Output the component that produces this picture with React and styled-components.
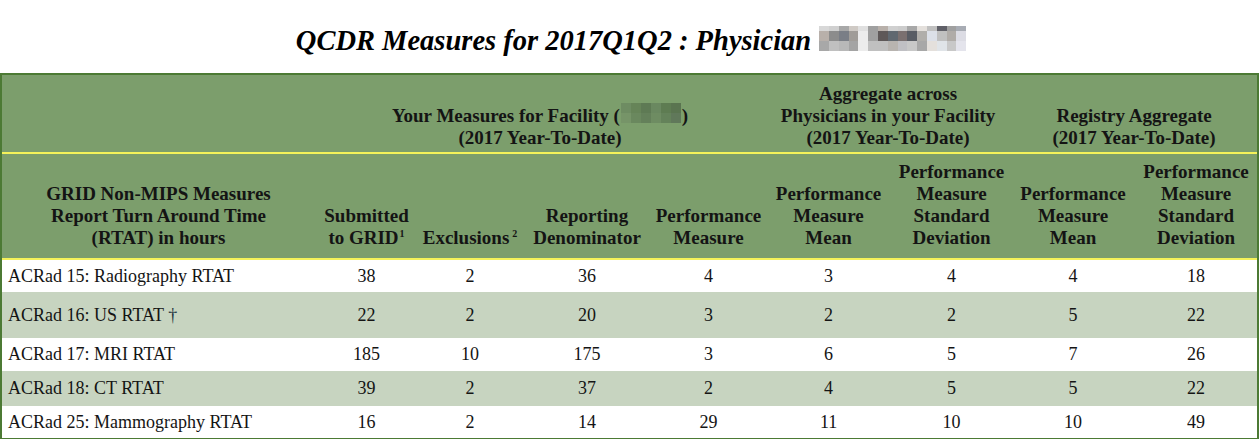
import React from 'react';
import styled, { createGlobalStyle } from 'styled-components';

const GlobalStyle = createGlobalStyle`
  html, body {
    margin: 0;
    padding: 0;
    background: #ffffff;
  }
  body {
    font-family: "Liberation Serif", "Times New Roman", serif;
    color: #111111;
  }
`;

const Page = styled.div`
  width: 1259px;
`;

const TitleBar = styled.div`
  height: 73px;
  box-sizing: border-box;
  padding: 26px 0 0 11px;
  text-align: center;
`;

const Title = styled.h1`
  margin: 0;
  font-size: 28.5px;
  font-weight: bold;
  font-style: italic;
  color: #000000;
  line-height: 1;
  white-space: nowrap;
`;

const Mosaic = styled.span`
  display: inline-block;
  overflow: hidden;
  vertical-align: ${p => p.$shift}px;
  margin: 0 ${p => p.$gap}px;
`;

const MosaicGrid = styled.span`
  display: grid;
  grid-template-columns: repeat(${p => p.$cols}, ${p => p.$cell}px);
  grid-template-rows: ${p => p.$rows};
`;

const Table = styled.table`
  width: 1259px;
  table-layout: fixed;
  border-collapse: separate;
  border-spacing: 0;
  border: 2px solid #4c7a34;
  font-family: "Liberation Serif", "Times New Roman", serif;
`;

const HeadRow = styled.tr`
  background: #7c9e6c;
`;

const HeadCell = styled.th`
  height: ${p => p.$height}px;
  padding: 0 2px ${p => p.$padBottom}px;
  box-sizing: border-box;
  vertical-align: bottom;
  text-align: center;
  font-size: 19px;
  line-height: 22px;
  font-weight: bold;
  color: #141414;
  border-bottom: 2px solid #f4f25a;
  white-space: nowrap;

  sup {
    font-size: 10px;
    line-height: 0;
    vertical-align: 7px;
    margin-left: ${p => (p.$supGap ? 3 : 1)}px;
  }
`;

const Row = styled.tr`
  background: ${p => (p.$striped ? '#c7d4c0' : '#ffffff')};
`;

const Cell = styled.td`
  height: ${p => p.$height}px;
  padding: 0 0 0 ${p => (p.$label ? 6 : 0)}px;
  box-sizing: border-box;
  text-align: ${p => (p.$label ? 'left' : 'center')};
  vertical-align: middle;
  font-size: 18px;
  color: #141414;
  white-space: nowrap;
`;

const Dagger = styled.span`
  color: #1e3440;
`;

const widths = [313, 103, 104, 130, 113, 127, 119, 124, 122];

const titleCells = [
  ['#d8d8d8', '#d0d0d0', '#a8a8a8', '#cfcac5', '#e0e0e0', '#a0a0a0', '#b8b0aa', '#d0d0d0', '#cccccc', '#a8a8a8', '#e4e0dc', '#c0c0c0', '#606068', '#a0a0a0', '#a8acb4'],
  ['#b8b0aa', '#8c8c8c', '#7a7e86', '#a09c98', '#ececec', '#a0a0a0', '#5e5858', '#606870', '#7a7070', '#585c64', '#b0aeaa', '#dce0e8', '#c0c0c0', '#b0aca8', '#dcdce4'],
  ['#a8a8a8', '#c0c0c0', '#b8b8b8', '#a4a4a4', '#ececec', '#c0c0c0', '#c0c0c0', '#b8b4b0', '#c0c0c4', '#c8c8c8', '#a8a8a8', '#e4e0dc', '#e0e4e8', '#c8c8c8', '#e4e4ec'],
];

const facilityCells = [
  ['#6e8c62', '#668458', '#5e7a54', '#6a8860', '#5e7c52', '#5a7450'],
  ['#769468', '#6a885e', '#64805a', '#6e8c62', '#64825a', '#60785a'],
];

const rows = [
  { name: 'ACRad 15: Radiography RTAT', values: [38, 2, 36, 4, 3, 4, 4, 18], height: 32 },
  { name: 'ACRad 16: US RTAT', dagger: true, values: [22, 2, 20, 3, 2, 2, 5, 22], height: 46 },
  { name: 'ACRad 17: MRI RTAT', values: [185, 10, 175, 3, 6, 5, 7, 26], height: 33 },
  { name: 'ACRad 18: CT RTAT', values: [39, 2, 37, 2, 4, 5, 5, 22], height: 35 },
  { name: 'ACRad 25: Mammography RTAT', values: [16, 2, 14, 29, 11, 10, 10, 49], height: 32 },
];

// pixelated placeholder for a redacted name
const Blur = ({ cells, cell, rowSizes, shift, gap }) => (
  <Mosaic $shift={shift} $gap={gap}>
    <MosaicGrid $cols={cells[0].length} $cell={cell} $rows={rowSizes}>
      {cells.flat().map((c, i) => (
        <span key={i} style={{ background: c }} />
      ))}
    </MosaicGrid>
  </Mosaic>
);

const App = () => (
  <Page>
    <GlobalStyle />
    <TitleBar>
      <Title>
        QCDR Measures for 2017Q1Q2 : Physician
        <Blur cells={titleCells} cell={9.8} rowSizes="5px 10px 10px" shift={-1} gap={8} />
      </Title>
    </TitleBar>
    <Table>
      <colgroup>
        {widths.map((w, i) => (
          <col key={i} style={{ width: w }} />
        ))}
      </colgroup>
      <thead>
        <HeadRow>
          <HeadCell $height={79} $padBottom={3} />
          <HeadCell colSpan={4} $height={79} $padBottom={3}>
            Your Measures for Facility (
            <Blur cells={facilityCells} cell={10} rowSizes="10px 10px" shift={-1} gap={1} />)
            <br />
            (2017 Year-To-Date)
          </HeadCell>
          <HeadCell colSpan={2} $height={79} $padBottom={3}>
            Aggregate across
            <br />
            Physicians in your Facility
            <br />
            (2017 Year-To-Date)
          </HeadCell>
          <HeadCell colSpan={2} $height={79} $padBottom={3}>
            Registry Aggregate
            <br />
            (2017 Year-To-Date)
          </HeadCell>
        </HeadRow>
        <HeadRow>
          <HeadCell $height={106} $padBottom={9}>
            GRID Non-MIPS Measures
            <br />
            Report Turn Around Time
            <br />
            (RTAT) in hours
          </HeadCell>
          <HeadCell $height={106} $padBottom={9}>
            Submitted
            <br />
            to GRID<sup>1</sup>
          </HeadCell>
          <HeadCell $height={106} $padBottom={9} $supGap>
            Exclusions<sup>2</sup>
          </HeadCell>
          <HeadCell $height={106} $padBottom={9}>
            Reporting
            <br />
            Denominator
          </HeadCell>
          <HeadCell $height={106} $padBottom={9}>
            Performance
            <br />
            Measure
          </HeadCell>
          <HeadCell $height={106} $padBottom={9}>
            Performance
            <br />
            Measure
            <br />
            Mean
          </HeadCell>
          <HeadCell $height={106} $padBottom={9}>
            Performance
            <br />
            Measure
            <br />
            Standard
            <br />
            Deviation
          </HeadCell>
          <HeadCell $height={106} $padBottom={9}>
            Performance
            <br />
            Measure
            <br />
            Mean
          </HeadCell>
          <HeadCell $height={106} $padBottom={9}>
            Performance
            <br />
            Measure
            <br />
            Standard
            <br />
            Deviation
          </HeadCell>
        </HeadRow>
      </thead>
      <tbody>
        {rows.map((r, i) => (
          <Row key={r.name} $striped={i % 2 === 1}>
            <Cell $label $height={r.height}>
              {r.name}
              {r.dagger && <Dagger> †</Dagger>}
            </Cell>
            {r.values.map((v, j) => (
              <Cell key={j} $height={r.height}>
                {v}
              </Cell>
            ))}
          </Row>
        ))}
      </tbody>
    </Table>
  </Page>
);

export default App;
